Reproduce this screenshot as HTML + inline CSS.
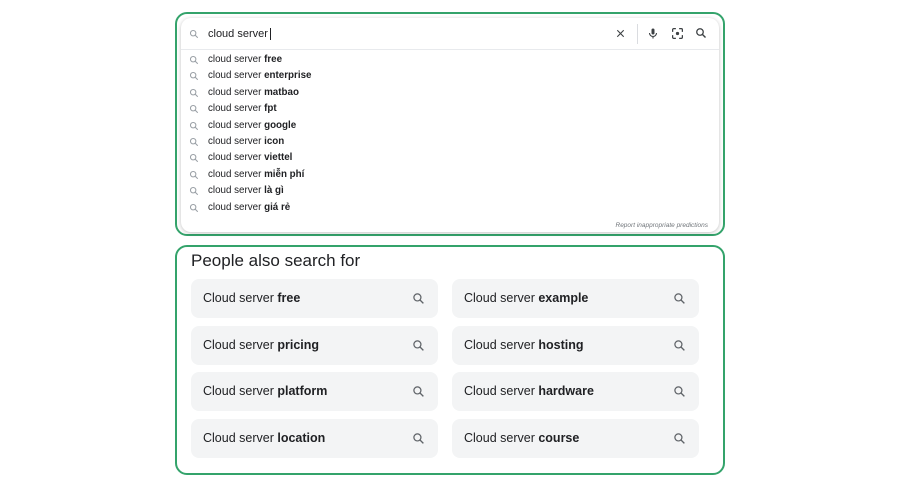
<!DOCTYPE html>
<html><head><meta charset="utf-8"><style>
*{margin:0;padding:0;box-sizing:border-box}
body{width:900px;height:487px;background:#fff;position:relative;font-family:"Liberation Sans",Arial,sans-serif;overflow:hidden}
.box{position:absolute;left:175px;width:550px;border:2px solid #34a36b;border-radius:12px}
#b1{top:12px;height:224px}
#b2{top:245px;height:230px}
.card{position:absolute;left:4px;top:4px;right:4px;bottom:2px;border-radius:10px;box-shadow:0 1px 4px rgba(0,0,0,.25);background:#fff}
.bar{position:absolute;left:0;right:0;top:0;height:32px;border-bottom:1px solid #e8eaed}
.q{position:absolute;left:27px;top:10px;font-size:11px;color:#202124}
.ico{position:absolute}
.sug{position:absolute;left:27px;font-size:9.8px;color:#202124}
.sug b{font-weight:bold}
.si{position:absolute;left:8px}
.rep{position:absolute;right:11px;bottom:3px;font-size:6.5px;font-style:italic;color:#70757a}
h2{position:absolute;left:14px;top:4px;font-size:17px;font-weight:normal;color:#202124}
.chip{position:absolute;width:247px;height:39px;background:#f3f4f5;border-radius:8px;font-size:12.5px;color:#202124;padding:12px 0 0 12px}
.chip svg{position:absolute;right:13px;top:13px}
</style></head><body>
<div class="box" id="b1"><div class="card">
<div class="bar">
<svg class="ico" style="left:8px;top:11px" width="10" height="10" viewBox="0 0 24 24"><circle cx="10" cy="10" r="6.5" fill="none" stroke="#9aa0a6" stroke-width="2.5"/><path d="M15 15l6 6" stroke="#9aa0a6" stroke-width="2.5"/></svg>
<div class="q">cloud server<span style="border-left:1px solid #202124;margin-left:2px"></span></div>
<svg class="ico" style="left:434px;top:10px" width="11" height="11" viewBox="0 0 24 24"><path d="M5 5l14 14M19 5L5 19" stroke="#3c4043" stroke-width="2.4"/></svg>
<div class="ico" style="left:456px;top:6px;width:1px;height:20px;background:#dadce0"></div>
<svg class="ico" style="left:466px;top:9px" width="12" height="13" viewBox="0 0 24 24"><rect x="9" y="2" width="6" height="12" rx="3" fill="#3c4043"/><path d="M5 11a7 7 0 0014 0M12 18v4" stroke="#3c4043" stroke-width="2.2" fill="none"/></svg>
<svg class="ico" style="left:490px;top:9px" width="13" height="13" viewBox="0 0 24 24"><path d="M3 9V5a2 2 0 012-2h4M15 3h4a2 2 0 012 2v4M21 15v4a2 2 0 01-2 2h-4M9 21H5a2 2 0 01-2-2v-4" stroke="#3c4043" stroke-width="2.3" fill="none"/><circle cx="12" cy="12" r="3" fill="#3c4043"/></svg>
<svg class="ico" style="left:514px;top:9px" width="12" height="12" viewBox="0 0 24 24"><circle cx="10" cy="10" r="6.5" fill="none" stroke="#3c4043" stroke-width="2.6"/><path d="M15 15l6 6" stroke="#3c4043" stroke-width="2.8"/></svg>
</div>
<div id="sugs"></div>
<div class="rep">Report inappropriate predictions</div>
</div></div>
<div class="box" id="b2">
<h2>People also search for</h2>
<div id="chips"></div>
</div>
<script>
var s=["free","enterprise","matbao","fpt","google","icon","viettel","miễn phí","là gì","giá rẻ"],h="";
s.forEach(function(t,i){var y=36+i*16.4;h+='<svg class="si" style="top:'+(y+1)+'px" width="10" height="10" viewBox="0 0 24 24"><circle cx="10" cy="10" r="6.5" fill="none" stroke="#9aa0a6" stroke-width="2.5"/><path d="M15 15l6 6" stroke="#9aa0a6" stroke-width="2.5"/></svg><div class="sug" style="top:'+y+'px">cloud server <b>'+t+'</b></div>';});
document.getElementById("sugs").innerHTML=h;
var c=[["free","example"],["pricing","hosting"],["platform","hardware"],["location","course"]],g="";
c.forEach(function(r,i){r.forEach(function(t,j){g+='<div class="chip" style="left:'+(14+j*261)+'px;top:'+(32+i*46.7)+'px">Cloud server <b>'+t+'</b><svg width="13" height="13" viewBox="0 0 24 24"><circle cx="10" cy="10" r="6.5" fill="none" stroke="#5f6368" stroke-width="2.3"/><path d="M15 15l6 6" stroke="#5f6368" stroke-width="2.5"/></svg></div>';});});
document.getElementById("chips").innerHTML=g;
</script>
</body></html>
